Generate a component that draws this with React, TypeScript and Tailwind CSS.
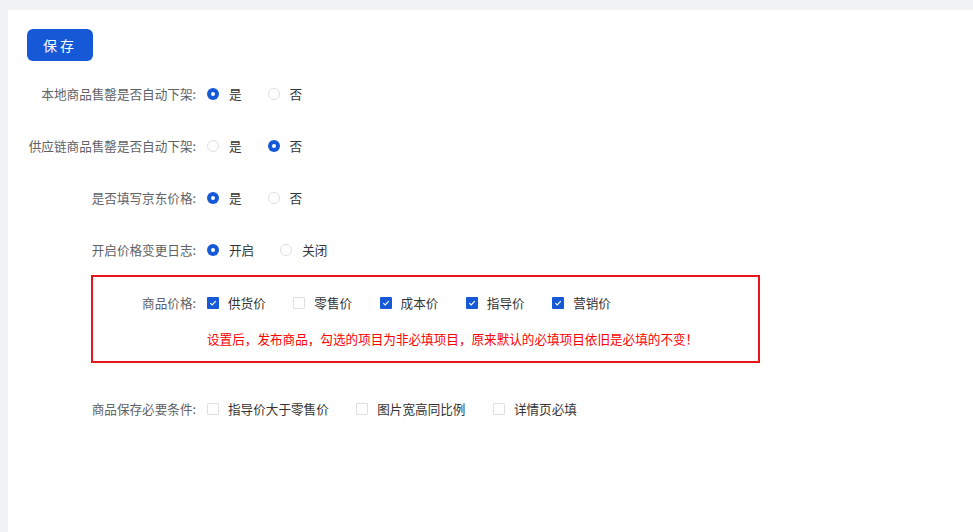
import { useState } from "react";

type Opt = { label: string; value: string };

function Radio({ checked, label, onClick }: { checked: boolean; label: string; onClick: () => void }) {
  return (
    <label onClick={onClick} className="flex items-center mr-[26px] cursor-pointer">
      {checked ? (
        <span className="w-[12px] h-[12px] rounded-full bg-[#1559d6] flex items-center justify-center">
          <span className="w-[4px] h-[4px] rounded-full bg-white" />
        </span>
      ) : (
        <span className="w-[12px] h-[12px] rounded-full border border-[#dcdfe6] bg-white" />
      )}
      <span className="ml-[10px] text-[#333]">{label}</span>
    </label>
  );
}

function Check({ checked, label, onClick }: { checked: boolean; label: string; onClick: () => void }) {
  return (
    <label onClick={onClick} className="flex items-center mr-[27.5px] cursor-pointer">
      {checked ? (
        <span className="w-[12px] h-[12px] rounded-[1px] bg-[#1559d6] flex items-center justify-center">
          <svg width="8" height="8" viewBox="0 0 8 8">
            <path d="M1.3 4.1 L3.2 5.9 L6.8 2.2" fill="none" stroke="white" strokeWidth="1.2" />
          </svg>
        </span>
      ) : (
        <span className="w-[12px] h-[12px] rounded-[1px] border border-[#dcdfe6] bg-white" />
      )}
      <span className="ml-[9px] text-[#333]">{label}</span>
    </label>
  );
}

const YES_NO: Opt[] = [
  { label: "是", value: "1" },
  { label: "否", value: "0" },
];

export default function App() {
  const [local, setLocal] = useState("1");
  const [supply, setSupply] = useState("0");
  const [jd, setJd] = useState("1");
  const [log, setLog] = useState("1");
  const [prices, setPrices] = useState<string[]>(["supply", "cost", "guide", "market"]);
  const [conds, setConds] = useState<string[]>([]);

  const priceOpts = [
    { label: "供货价", value: "supply" },
    { label: "零售价", value: "retail" },
    { label: "成本价", value: "cost" },
    { label: "指导价", value: "guide" },
    { label: "营销价", value: "market" },
  ];
  const condOpts = [
    { label: "指导价大于零售价", value: "a" },
    { label: "图片宽高同比例", value: "b" },
    { label: "详情页必填", value: "c" },
  ];

  function toggle(list: string[], set: (v: string[]) => void, v: string) {
    set(list.includes(v) ? list.filter((x) => x !== v) : [...list, v]);
  }

  const radioRows = [
    { label: "本地商品售罄是否自动下架:", value: local, set: setLocal, opts: YES_NO },
    { label: "供应链商品售罄是否自动下架:", value: supply, set: setSupply, opts: YES_NO },
    { label: "是否填写京东价格:", value: jd, set: setJd, opts: YES_NO },
    {
      label: "开启价格变更日志:",
      value: log,
      set: setLog,
      opts: [
        { label: "开启", value: "1" },
        { label: "关闭", value: "0" },
      ],
    },
  ];

  return (
    <div
      className="min-h-screen bg-[#f0f2f5] pt-[10px] pl-[8px] text-[12.6px]"
      style={{ fontFamily: '"Noto Sans CJK SC", "Noto Sans", sans-serif' }}
    >
      <div className="bg-white h-[522px] pt-[19px]">
        <div className="pl-[19px]">
          <button className="w-[66px] h-[32px] rounded-[6px] bg-[#1559d6] text-white text-[14px] tracking-[3px]">
            保存
          </button>
        </div>

        <div className="mt-[17px] flex flex-col gap-[20px]">
          {radioRows.map((row) => (
            <div key={row.label} className="flex items-center h-[32px]">
              <div className="w-[188px] text-right text-[#606266] whitespace-nowrap">{row.label}</div>
              <div className="ml-[11px] flex items-center">
                {row.opts.map((o) => (
                  <Radio key={o.value} checked={row.value === o.value} label={o.label} onClick={() => row.set(o.value)} />
                ))}
              </div>
            </div>
          ))}
        </div>

        <div className="mt-[9px] ml-[83px] w-[669px] border-2 border-[#e8141b] pt-[10px] pb-[12px]">
          <div className="flex items-center h-[32px]">
            <div className="w-[103px] text-right text-[#606266]">商品价格:</div>
            <div className="ml-[11px] flex items-center">
              {priceOpts.map((o) => (
                <Check
                  key={o.value}
                  checked={prices.includes(o.value)}
                  label={o.label}
                  onClick={() => toggle(prices, setPrices, o.value)}
                />
              ))}
            </div>
          </div>
          <div className="mt-[10px] ml-[114px] h-[20px] leading-[20px] text-[#ff0000]">
            设置后，发布商品，勾选的项目为非必填项目，原来默认的必填项目依旧是必填的不变！
          </div>
        </div>

        <div className="mt-[30px] flex items-center h-[32px]">
          <div className="w-[188px] text-right text-[#606266]">商品保存必要条件:</div>
          <div className="ml-[11px] flex items-center">
            {condOpts.map((o) => (
              <Check
                key={o.value}
                checked={conds.includes(o.value)}
                label={o.label}
                onClick={() => toggle(conds, setConds, o.value)}
              />
            ))}
          </div>
        </div>
      </div>
    </div>
  );
}
